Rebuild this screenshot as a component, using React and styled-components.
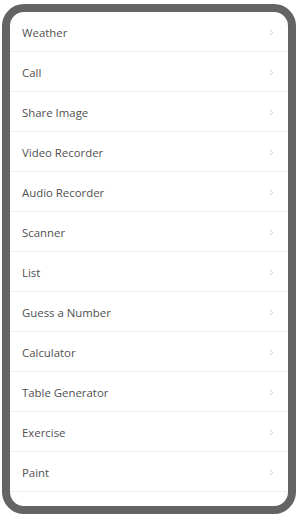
import React from 'react'
import styled, { createGlobalStyle } from 'styled-components'

const GlobalStyle = createGlobalStyle`
  html, body {
    margin: 0;
    padding: 0;
    background: #ffffff;
  }
  body {
    font-family: "Open Sans", "Noto Sans", sans-serif;
  }
`;

const Frame = styled.div`
  box-sizing: border-box;
  width: 294px;
  height: 510px;
  margin: 4px 0 0 2px;
  border: 8px solid #646464;
  border-radius: 22px;
  background: #ffffff;
  overflow: hidden;
`;

const List = styled.ul`
  list-style: none;
  margin: 0;
  padding: 0;
`;

const Row = styled.li`
  display: flex;
  align-items: center;
  justify-content: space-between;
  height: 40px;
  box-sizing: border-box;
  padding: 2px 14px 0 12px;
  border-bottom: 1px solid #efefef;
`;

const Label = styled.span`
  font-size: 11.4px;
  color: #505050;
`;

const Chevron = styled.svg`
  width: 5px;
  height: 7px;
  color: #c8c8c8;
`;

const items = [
  'Weather',
  'Call',
  'Share Image',
  'Video Recorder',
  'Audio Recorder',
  'Scanner',
  'List',
  'Guess a Number',
  'Calculator',
  'Table Generator',
  'Exercise',
  'Paint',
]

function App() {
  return (
    <>
      <GlobalStyle />
      <Frame>
        <List>
          {items.map((item) => (
            <Row key={item}>
              <Label>{item}</Label>
              <Chevron viewBox="0 0 5 7">
                <path d="M1 0.8 L3.8 3.5 L1 6.2" fill="none" stroke="currentColor" strokeWidth="1" />
              </Chevron>
            </Row>
          ))}
        </List>
      </Frame>
    </>
  )
}

export default App
